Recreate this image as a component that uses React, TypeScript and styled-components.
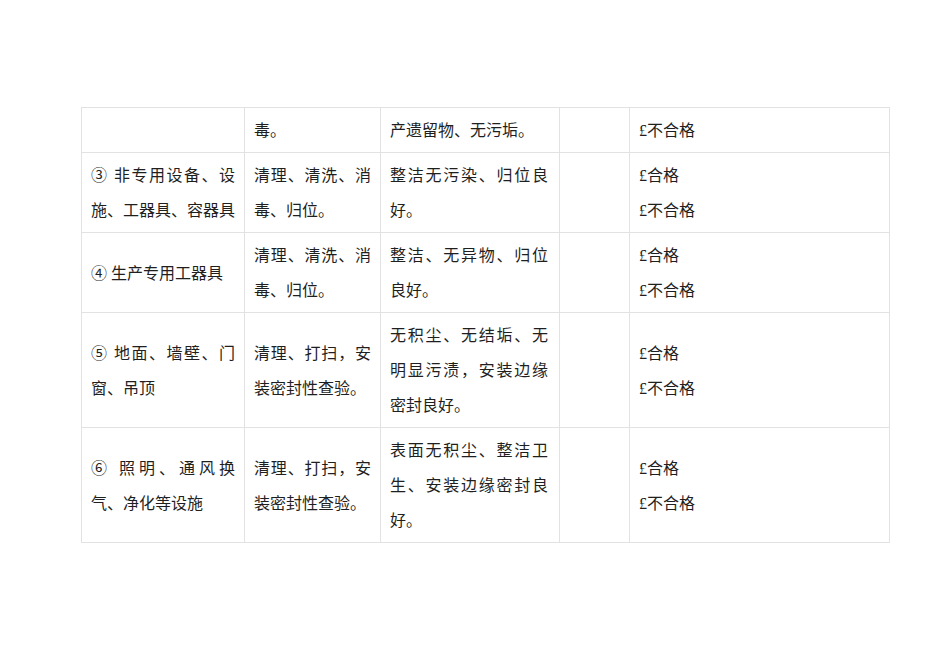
import styled, { createGlobalStyle } from 'styled-components';

const GlobalStyle = createGlobalStyle`
    html, body {
        margin: 0;
        padding: 0;
        background: #ffffff;
    }
    body {
        font-family: 'Liberation Serif', 'Noto Sans CJK SC', serif;
        color: #1f1f1f;
    }
`;

const Page = styled.div`
    width: 950px;
    height: 672px;
    padding: 107px 0 0 81px;
    box-sizing: border-box;
`;

const Sheet = styled.table`
    width: 808px;
    table-layout: fixed;
    border-collapse: collapse;
    font-size: 16px;
    line-height: 35px;
`;

const Col = styled.col<{ $w: number }>`
    width: ${(p) => p.$w}px;
`;

const Cell = styled.td<{ $padRight?: number }>`
    border: 1px solid #e2e2e2;
    padding: 5px ${(p) => p.$padRight ?? 9}px 4px 9px;
    vertical-align: middle;
    text-align: justify;
    word-break: normal;
`;

const Line = styled.div`
    white-space: nowrap;
`;

type Row = {
    item: string;
    method: string;
    standard: string;
    results: string[];
};

const rows: Row[] = [
    { item: '', method: '毒。', standard: '产遗留物、无污垢。', results: ['£不合格'] },
    {
        item: '③ 非专用设备、设施、工器具、容器具',
        method: '清理、清洗、消毒、归位。',
        standard: '整洁无污染、归位良好。',
        results: ['£合格', '£不合格'],
    },
    {
        item: '④ 生产专用工器具',
        method: '清理、清洗、消毒、归位。',
        standard: '整洁、无异物、归位良好。',
        results: ['£合格', '£不合格'],
    },
    {
        item: '⑤ 地面、墙壁、门窗、吊顶',
        method: '清理、打扫，安装密封性查验。',
        standard: '无积尘、无结垢、无明显污渍，安装边缘密封良好。',
        results: ['£合格', '£不合格'],
    },
    {
        item: '⑥ 照明、通风换气、净化等设施',
        method: '清理、打扫，安装密封性查验。',
        standard: '表面无积尘、整洁卫生、安装边缘密封良好。',
        results: ['£合格', '£不合格'],
    },
];

const App = () => {
    return (
        <>
            <GlobalStyle />
            <Page>
                <Sheet>
                    <colgroup>
                        <Col $w={163} />
                        <Col $w={136} />
                        <Col $w={179} />
                        <Col $w={70} />
                        <Col $w={260} />
                    </colgroup>
                    <tbody>
                        {rows.map((r, i) => (
                            <tr key={i}>
                                <Cell>{r.item}</Cell>
                                <Cell>{r.method}</Cell>
                                <Cell $padRight={11}>{r.standard}</Cell>
                                <Cell />
                                <Cell>
                                    {r.results.map((t) => (
                                        <Line key={t}>{t}</Line>
                                    ))}
                                </Cell>
                            </tr>
                        ))}
                    </tbody>
                </Sheet>
            </Page>
        </>
    );
};

export default App;
